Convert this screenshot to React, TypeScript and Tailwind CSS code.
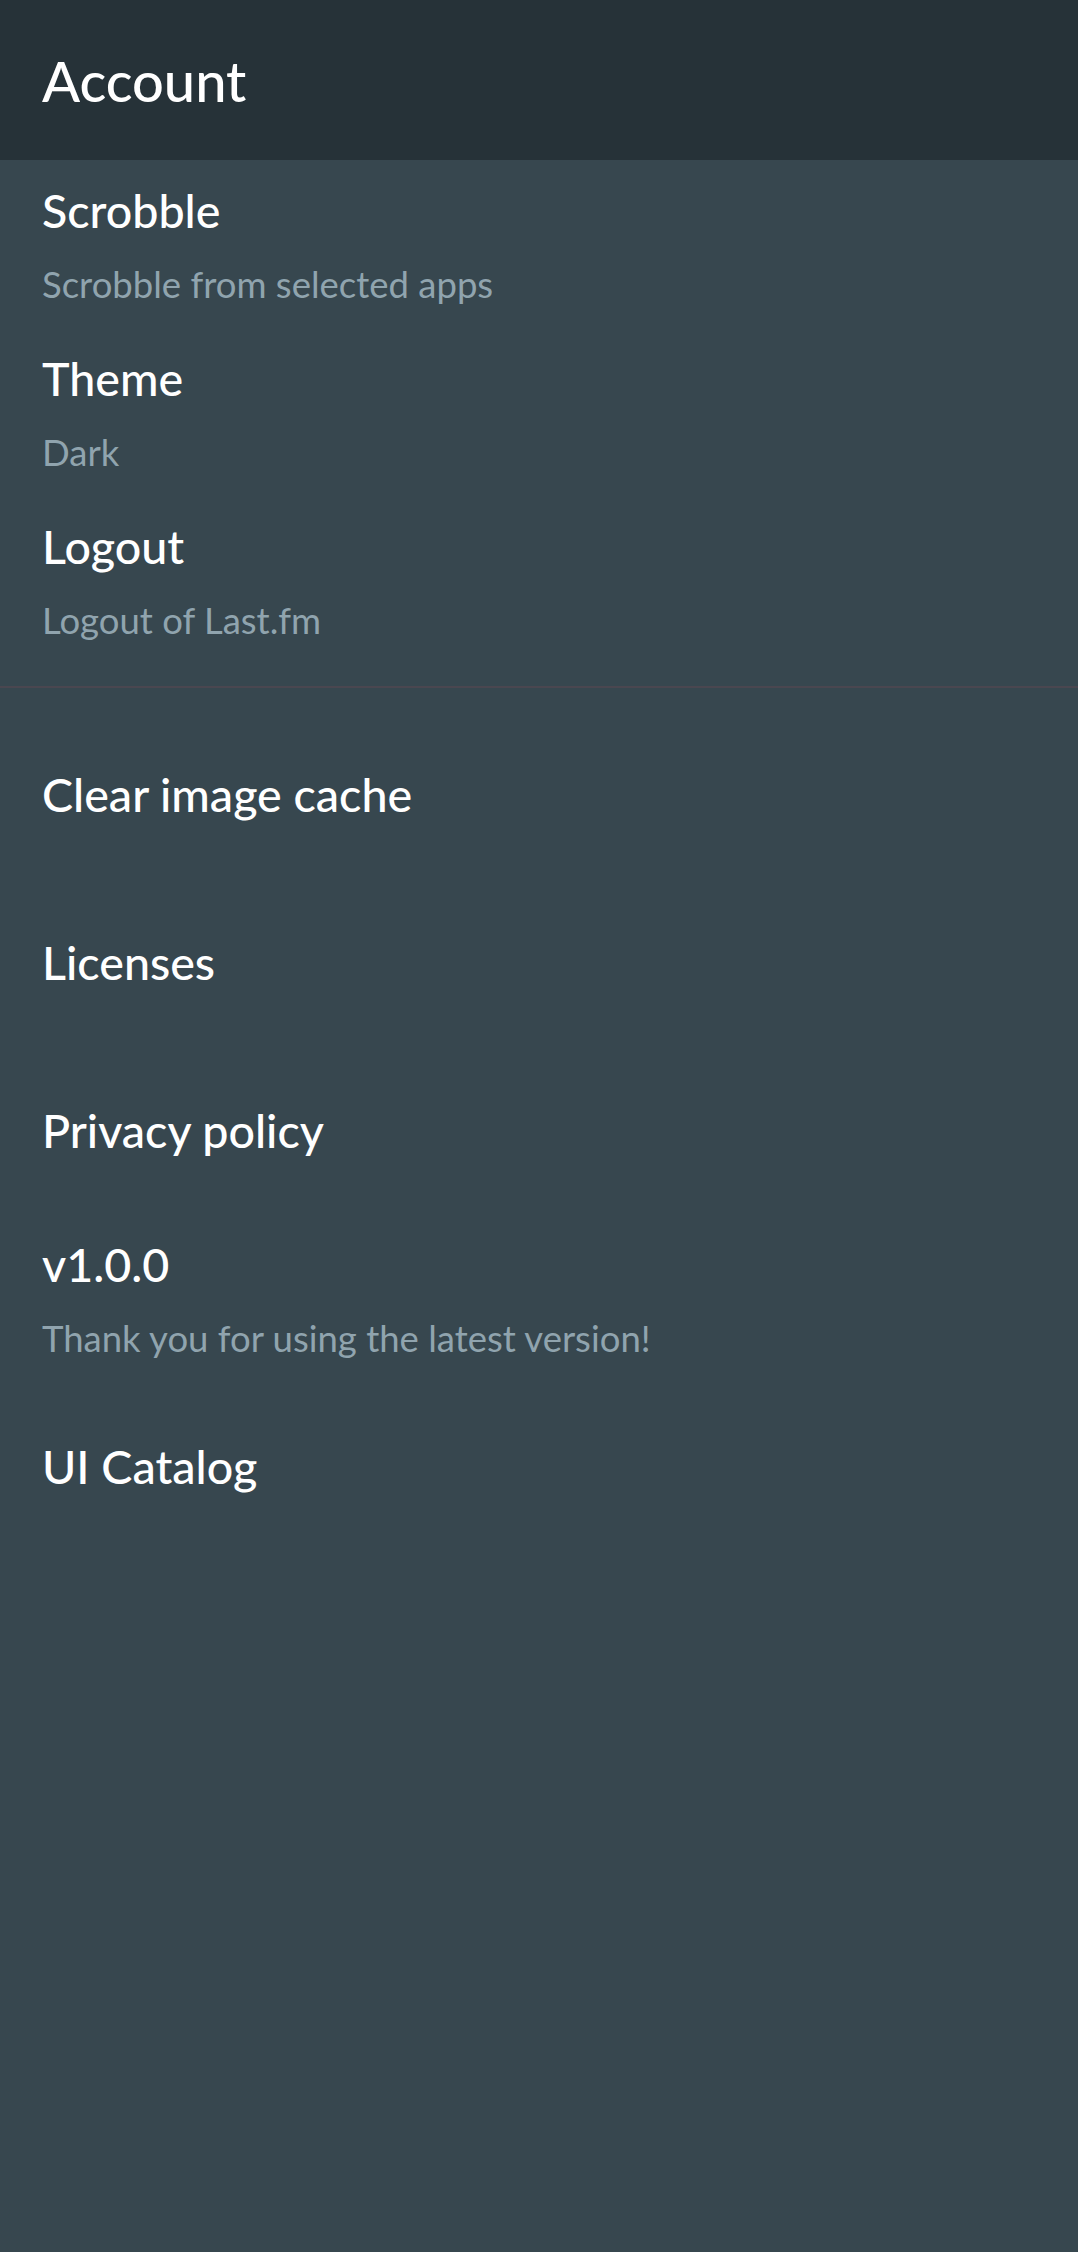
import React from "react";

type Item = { title: string; subtitle?: string };

const account: Item[] = [
  { title: "Scrobble", subtitle: "Scrobble from selected apps" },
  { title: "Theme", subtitle: "Dark" },
  { title: "Logout", subtitle: "Logout of Last.fm" },
];

const other: Item[] = [
  { title: "Clear image cache" },
  { title: "Licenses" },
  { title: "Privacy policy" },
  { title: "v1.0.0", subtitle: "Thank you for using the latest version!" },
  { title: "UI Catalog" },
];

const Row = ({ item }: { item: Item }) => (
  <div className="min-h-[168px] flex flex-col justify-center px-[42px]">
    <p className="text-[46.6px] leading-[55px] font-medium text-white">{item.title}</p>
    {item.subtitle && (
      <p className="mt-[24px] text-[36.5px] leading-[44px] text-[#90a4ae]">
        {item.subtitle}
      </p>
    )}
  </div>
);

export default function App() {
  return (
    <div
      className="min-h-[2252px] bg-[#37474f]"
      style={{ fontFamily: "Lato, 'Noto Sans', sans-serif" }}
    >
      {/* Toolbar */}
      <header className="h-[160px] bg-[#263238] flex items-center px-[42px]">
        <h1 className="text-[56px] leading-[67px] font-medium text-white">Account</h1>
      </header>

      {/* Account prefs */}
      <section className="pb-[22px]">
        {account.map((item) => (
          <Row key={item.title} item={item} />
        ))}
      </section>

      <div className="h-[2px] bg-[#4a4750]" />

      {/* General */}
      <section className="pt-[22px]">
        {other.map((item) => (
          <Row key={item.title} item={item} />
        ))}
      </section>
    </div>
  );
}
